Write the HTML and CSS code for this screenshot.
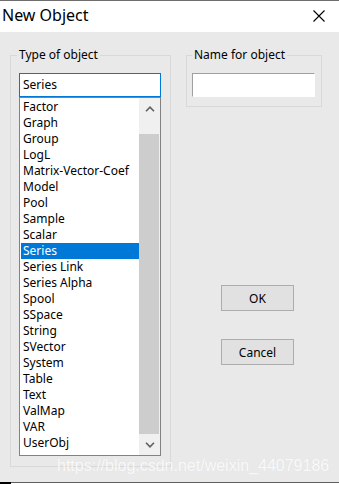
FILE: index.html
```html
<!DOCTYPE html>
<html lang="en">
<head>
    <meta charset="UTF-8">
    <title>New Object</title>
    <link rel="stylesheet" href="styles.css">
</head>
<body>
    <div class="window">
        <div class="title-bar">
            <span class="title">New Object</span>
            <svg class="close" width="12" height="12" viewBox="0 0 12 12">
                <path d="M0.5 0.5 L11.5 11.5 M11.5 0.5 L0.5 11.5" stroke="#000" stroke-width="1.1" fill="none"/>
            </svg>
        </div>

        <div class="client">
            <fieldset class="group group-type">
                <legend>Type of object</legend>
                <div class="combo">Series</div>
                <div class="listbox">
                    <ul class="items">
                        <li>Factor</li>
                        <li>Graph</li>
                        <li>Group</li>
                        <li>LogL</li>
                        <li>Matrix-Vector-Coef</li>
                        <li>Model</li>
                        <li>Pool</li>
                        <li>Sample</li>
                        <li>Scalar</li>
                        <li class="selected">Series</li>
                        <li>Series Link</li>
                        <li>Series Alpha</li>
                        <li>Spool</li>
                        <li>SSpace</li>
                        <li>String</li>
                        <li>SVector</li>
                        <li>System</li>
                        <li>Table</li>
                        <li>Text</li>
                        <li>ValMap</li>
                        <li>VAR</li>
                        <li>UserObj</li>
                    </ul>
                    <div class="scrollbar">
                        <div class="arrow">
                            <svg width="10" height="6" viewBox="0 0 10 6"><path d="M1 5.2 L5 1.2 L9 5.2" stroke="#606060" stroke-width="1.6" fill="none"/></svg>
                        </div>
                        <div class="track"></div>
                        <div class="thumb"></div>
                        <div class="arrow">
                            <svg width="10" height="6" viewBox="0 0 10 6"><path d="M1 0.8 L5 4.8 L9 0.8" stroke="#606060" stroke-width="1.6" fill="none"/></svg>
                        </div>
                    </div>
                </div>
            </fieldset>

            <div class="side">
                <fieldset class="group group-name">
                    <legend>Name for object</legend>
                    <div class="edit"></div>
                </fieldset>
                <button class="btn btn-ok">OK</button>
                <button class="btn btn-cancel">Cancel</button>
            </div>
        </div>

        <div class="watermark">https://blog.csdn.net/weixin_44079186</div>
        <div class="bottom-edge"><span class="corner"></span></div>
    </div>
</body>
</html>
```

FILE: styles.css
```css
* {
    margin: 0;
    padding: 0;
    box-sizing: border-box;
}

body {
    font-family: "Noto Sans", sans-serif;
    font-size: 12px;
    color: #000;
    background: #e9e9e9;
}

.window {
    position: relative;
    width: 339px;
    height: 484px;
    overflow: hidden;
    border-top: 1px solid #6e6e6e;
    background: #e9e9e9;
}

.title-bar {
    height: 31px;
    background: #fff;
    display: flex;
    align-items: center;
    justify-content: space-between;
    padding: 0 14px 1px 2px;
}

.title {
    font-size: 16px;
    line-height: 20px;
    margin-top: -2px;
}

.close {
    display: block;
    margin-top: -1px;
}

.client {
    height: 450px;
    display: flex;
    align-items: flex-start;
    padding: 15px 0 0 10px;
}

.group {
    margin: 0;
    min-width: 0;
    border: 1px solid #d9d9d9;
}

.group legend {
    line-height: 16px;
    padding: 0 2px;
}

.group-type {
    width: 161px;
    padding: 10px 9px 10px 8px;
}

.group-type legend {
    margin-left: -2px;
}

.combo {
    height: 24px;
    border: 1px solid #0078d7;
    background: #fff;
    line-height: 22px;
    padding-left: 3px;
}

.listbox {
    height: 359px;
    display: flex;
    border: 1px solid #828282;
    background: #fff;
}

.items {
    list-style: none;
    width: 119px;
    padding: 1px 0 0 1px;
}

.items li {
    height: 16px;
    line-height: 16px;
    padding-left: 2px;
    white-space: nowrap;
}

.items li.selected {
    background: #0078d7;
    color: #fff;
}

.scrollbar {
    width: 21px;
    display: flex;
    flex-direction: column;
    background: #f0f0f0;
}

.scrollbar .arrow {
    height: 21px;
    display: flex;
    align-items: center;
    justify-content: center;
}

.scrollbar .arrow svg {
    display: block;
}

.scrollbar .track {
    height: 15px;
}

.scrollbar .thumb {
    flex: 1;
    margin: 0 1px 0 0;
    background: #cdcdcd;
}

.side {
    margin-left: 15px;
    display: flex;
    flex-direction: column;
    align-items: flex-start;
}

.group-name {
    width: 136px;
    padding: 10px 6px 9px 5px;
}

.group-name legend {
    margin-left: 0;
}

.edit {
    width: 123px;
    height: 24px;
    background: #fff;
    border: 1px solid;
    border-color: #a0a0a0 #fff #fff #a0a0a0;
}

.btn {
    width: 73px;
    height: 26px;
    margin-left: 35px;
    border: 1px solid #adadad;
    background: #e1e1e1;
    font-family: "Noto Sans", sans-serif;
    font-size: 12px;
    color: #000;
}

.btn-ok {
    margin-top: 178px;
}

.btn-cancel {
    margin-top: 28px;
}

.watermark {
    position: absolute;
    left: 57px;
    top: 456px;
    font-family: "Liberation Sans", Arial, sans-serif;
    font-size: 16px;
    line-height: 18px;
    color: rgba(255, 255, 255, 0.85);
    text-shadow: 0 0 1px rgba(0, 0, 0, 0.06);
    white-space: nowrap;
}

.bottom-edge {
    height: 2px;
    border-top: 1px solid #5e5e5e;
    background: #fff;
    position: relative;
}

.corner {
    position: absolute;
    left: 0;
    top: -1px;
    width: 11px;
    height: 2px;
    background: #000;
}
```
